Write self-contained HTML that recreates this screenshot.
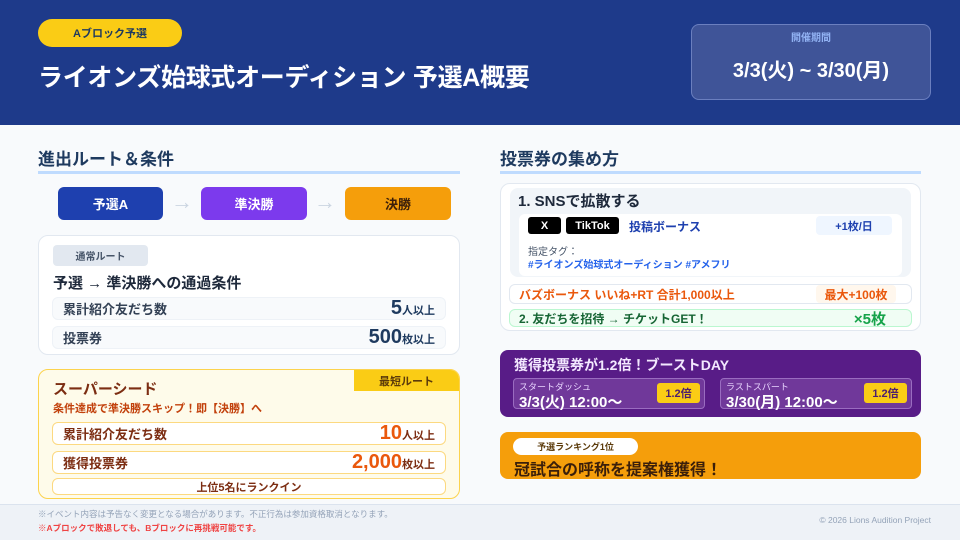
<!DOCTYPE html>
<html><head><meta charset="utf-8"><style>
*{margin:0;padding:0;box-sizing:border-box}
body{width:960px;height:540px;overflow:hidden;background:#f8fafc;font-family:"Liberation Sans","Noto Sans CJK JP",sans-serif;position:relative;font-weight:bold}
.a{position:absolute}
.c{display:flex;align-items:center;justify-content:center}
.row{position:absolute;display:flex;align-items:center;justify-content:space-between;padding:0 10px;border-radius:6px}
</style></head><body>
<div class="a" style="left:0;top:0;width:960px;height:125px;background:#1e3a8a"></div>
<div class="a c" style="left:38px;top:19px;width:144px;height:28px;border-radius:14px;background:#facc15;color:#1e3a5f;font-size:11px">Aブロック予選</div>
<div class="a" style="left:38px;top:60px;color:#fff;font-size:25px;line-height:36px;letter-spacing:-0.3px">ライオンズ始球式オーディション 予選A概要</div>
<div class="a" style="left:691px;top:24px;width:240px;height:76px;border-radius:8px;background:#3f5498;border:1px solid #6b7fbf"></div>
<div class="a c" style="left:691px;top:29px;width:240px;font-size:10px;color:#93b4f5">開催期間</div>
<div class="a c" style="left:691px;top:54px;width:240px;font-size:20px;color:#fff">3/3(火) ~ 3/30(月)</div>

<div class="a" style="left:38px;top:145px;font-size:17px;color:#1e3a5f">進出ルート＆条件</div>
<div class="a" style="left:38px;top:171px;width:422px;height:3px;background:#bfdbfe"></div>
<div class="a c" style="left:58px;top:187px;width:105px;height:33px;border-radius:6px;background:#1e40af;color:#fff;font-size:13px">予選A</div>
<div class="a" style="left:171px;top:189px;color:#cbd5e1;font-size:22px">→</div>
<div class="a c" style="left:201px;top:187px;width:106px;height:33px;border-radius:6px;background:#7c3aed;color:#fff;font-size:13px">準決勝</div>
<div class="a" style="left:314px;top:189px;color:#cbd5e1;font-size:22px">→</div>
<div class="a c" style="left:345px;top:187px;width:106px;height:33px;border-radius:6px;background:#f59e0b;color:#3b1f0a;font-size:13px">決勝</div>

<div class="a" style="left:38px;top:235px;width:422px;height:120px;background:#fff;border:1px solid #e2e8f0;border-radius:10px"></div>
<div class="a c" style="left:53px;top:245px;width:95px;height:21px;background:#e2e8f0;border-radius:4px;font-size:10px;color:#475569">通常ルート</div>
<div class="a" style="left:53px;top:272px;font-size:15px;color:#1e293b">予選 → 準決勝への通過条件</div>
<div class="row" style="left:52px;top:297px;width:394px;height:23px;background:#f8fafc;border:1px solid #eef2f7"><span style="font-size:13px;color:#334155">累計紹介友だち数</span><span style="color:#1e3a5f"><span style="font-size:20px">5</span><span style="font-size:11px">人以上</span></span></div>
<div class="row" style="left:52px;top:326px;width:394px;height:23px;background:#f8fafc;border:1px solid #eef2f7"><span style="font-size:13px;color:#334155">投票券</span><span style="color:#1e3a5f"><span style="font-size:20px">500</span><span style="font-size:11px">枚以上</span></span></div>

<div class="a" style="left:38px;top:369px;width:422px;height:130px;background:#fefbea;border:1px solid #fcd34d;border-radius:10px;overflow:hidden"><div class="a c" style="right:0;top:0;width:105px;height:21px;background:#facc15;font-size:11px;color:#5b3a0a">最短ルート</div></div>
<div class="a" style="left:53px;top:378px;font-size:15px;color:#7c2d12">スーパーシード</div>
<div class="a" style="left:53px;top:400px;font-size:11px;color:#c2410c">条件達成で準決勝スキップ！即【決勝】へ</div>
<div class="row" style="left:52px;top:422px;width:394px;height:23px;background:#fff;border:1px solid #fcd980"><span style="font-size:13px;color:#7c2d12">累計紹介友だち数</span><span style="color:#ea580c"><span style="font-size:20px">10</span><span style="font-size:11px;color:#7c2d12">人以上</span></span></div>
<div class="row" style="left:52px;top:451px;width:394px;height:23px;background:#fff;border:1px solid #fcd980"><span style="font-size:13px;color:#7c2d12">獲得投票券</span><span style="color:#ea580c"><span style="font-size:20px">2,000</span><span style="font-size:11px;color:#7c2d12">枚以上</span></span></div>
<div class="a c" style="left:52px;top:478px;width:394px;height:17px;background:#fff;border:1px solid #fcd980;border-radius:6px;font-size:11px;color:#7c2d12">上位5名にランクイン</div>

<div class="a" style="left:0;top:504px;width:960px;height:36px;background:#eef2f7;border-top:1px solid #dbe3ee"></div>
<div class="a" style="left:38px;top:508px;font-size:8.5px;color:#94a3b8;font-weight:normal">※イベント内容は予告なく変更となる場合があります。不正行為は参加資格取消となります。</div>
<div class="a" style="left:38px;top:522px;font-size:8.5px;color:#ef4444">※Aブロックで敗退しても、Bブロックに再挑戦可能です。</div>
<div class="a" style="right:29px;top:515px;font-size:8.5px;color:#94a3b8;font-weight:normal">© 2026 Lions Audition Project</div>

<div class="a" style="left:500px;top:145px;font-size:17px;color:#1e3a5f">投票券の集め方</div>
<div class="a" style="left:500px;top:171px;width:421px;height:3px;background:#bfdbfe"></div>
<div class="a" style="left:500px;top:183px;width:421px;height:148px;background:#fff;border:1px solid #e2e8f0;border-radius:10px"></div>
<div class="a" style="left:510px;top:188px;width:401px;height:89px;background:#f1f5f9;border-radius:8px"></div>
<div class="a" style="left:518px;top:190px;font-size:15px;color:#1e293b">1. SNSで拡散する</div>
<div class="a" style="left:519px;top:214px;width:383px;height:62px;background:#fff;border-radius:6px"></div>
<div class="a c" style="left:528px;top:217px;width:33px;height:17px;background:#000;color:#fff;border-radius:3px;font-size:11px">X</div>
<div class="a c" style="left:566px;top:217px;width:53px;height:17px;background:#000;color:#fff;border-radius:3px;font-size:11px">TikTok</div>
<div class="a" style="left:629px;top:218px;font-size:12px;color:#1e40af">投稿ボーナス</div>
<div class="a c" style="left:816px;top:216px;width:76px;height:19px;background:#eff6ff;border-radius:4px;font-size:11px;color:#1e40af">+1枚/日</div>
<div class="a" style="left:528px;top:243px;font-size:10px;color:#475569;font-weight:normal">指定タグ：</div>
<div class="a" style="left:528px;top:256px;font-size:10px;color:#2563eb">#ライオンズ始球式オーディション #アメフリ</div>
<div class="row" style="left:509px;top:284px;width:403px;height:20px;background:#fff;border:1px solid #e2e8f0;padding-left:9px;padding-right:16px"><span style="font-size:12px;color:#ea580c">バズボーナス いいね+RT 合計1,000以上</span></div>
<div class="a c" style="left:816px;top:285px;width:80px;height:18px;background:#fff7ed;border-radius:4px;font-size:12px;color:#ea580c">最大+100枚</div>
<div class="row" style="left:509px;top:309px;width:403px;height:18px;background:#f0fdf4;border:1px solid #bbf7d0;padding-left:9px;padding-right:25px"><span style="font-size:12px;color:#166534">2. 友だちを招待 → チケットGET！</span><span style="font-size:15px;color:#16a34a">×5枚</span></div>

<div class="a" style="left:500px;top:350px;width:421px;height:67px;background:#581c87;border-radius:8px"></div>
<div class="a" style="left:514px;top:355px;font-size:14px;color:#f3e8ff">獲得投票券が1.2倍！ブーストDAY</div>
<div class="a" style="left:513px;top:378px;width:192px;height:31px;background:#70389a;border:1px solid #9a6cc0;border-radius:4px"></div>
<div class="a" style="left:519px;top:380px;font-size:9px;color:#e9d5ff;font-weight:normal">スタートダッシュ</div>
<div class="a" style="left:519px;top:391px;font-size:15px;color:#fff">3/3(火) 12:00～</div>
<div class="a c" style="left:657px;top:383px;width:43px;height:20px;background:#facc15;border-radius:3px;font-size:11px;color:#4c1d6e">1.2倍</div>
<div class="a" style="left:720px;top:378px;width:192px;height:31px;background:#70389a;border:1px solid #9a6cc0;border-radius:4px"></div>
<div class="a" style="left:726px;top:380px;font-size:9px;color:#e9d5ff;font-weight:normal">ラストスパート</div>
<div class="a" style="left:726px;top:391px;font-size:15px;color:#fff">3/30(月) 12:00～</div>
<div class="a c" style="left:864px;top:383px;width:43px;height:20px;background:#facc15;border-radius:3px;font-size:11px;color:#4c1d6e">1.2倍</div>

<div class="a" style="left:500px;top:432px;width:421px;height:47px;background:#f59e0b;border-radius:8px"></div>
<div class="a c" style="left:513px;top:438px;width:125px;height:17px;background:#fff;border-radius:9px;font-size:9px;color:#5b3a0a">予選ランキング1位</div>
<div class="a" style="left:514px;top:456px;font-size:16px;color:#3b1f0a">冠試合の呼称を提案権獲得！</div>
</body></html>
